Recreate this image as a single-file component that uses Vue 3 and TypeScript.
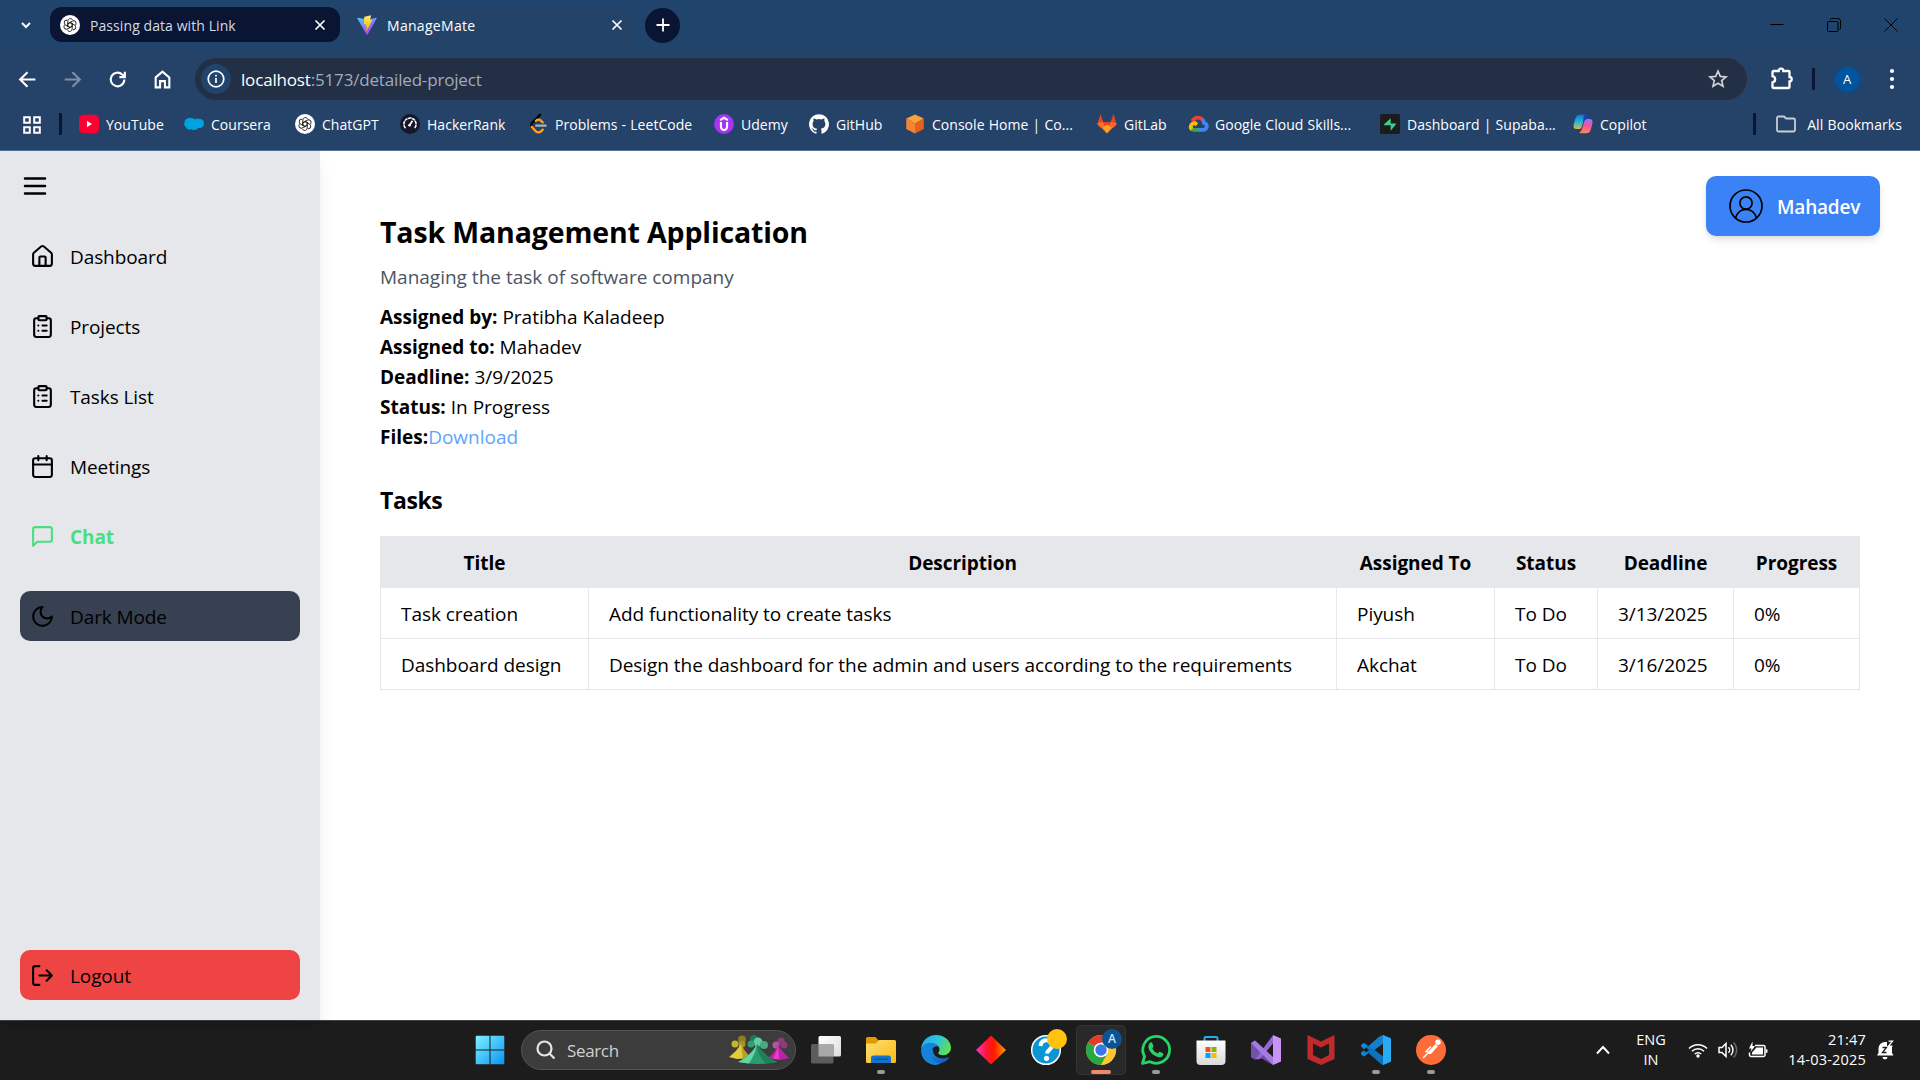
<script setup lang="ts">
interface Bookmark { label: string; icon: string }
interface NavItem { label: string; icon: string; active?: boolean }
interface TaskRow { title: string; description: string; assignee: string; status: string; deadline: string; progress: string }
interface TaskbarApp { name: string; icon: string; running?: boolean; focused?: boolean }

const knot =
  '<circle cx="12" cy="12" r="12" fill="#fff"/><g fill="none" stroke="#222" stroke-width="1.1">' +
  [0, 60, 120, 180, 240, 300]
    .map((a) => `<path transform="rotate(${a} 12 12)" d="M9.4 13.6V7.2a3 3 0 0 1 5.2-2l.6 1M9.4 10.5l3.6-2.1"/>`)
    .join('') +
  '</g>'

const icons: Record<string, string> = {
  openai: knot,
  vite:
    '<defs><linearGradient id="va" x1="0" y1="0" x2=".6" y2="1"><stop stop-color="#41d1ff"/><stop offset="1" stop-color="#bd34fe"/></linearGradient><linearGradient id="vb" x1="0" y1="0" x2="0" y2="1"><stop stop-color="#ffea83"/><stop offset=".3" stop-color="#ffdd35"/><stop offset="1" stop-color="#ffa800"/></linearGradient></defs><path d="M23.6 4.3 12.7 23.5a.7.7 0 0 1-1.2 0L.4 4.3a.7.7 0 0 1 .7-1l10.9 2 10.9-2a.7.7 0 0 1 .7 1z" fill="url(#va)"/><path d="M17 .4 9 2a.4.4 0 0 0-.3.3L8.2 10.6a.4.4 0 0 0 .4.4l2.3-.5-.7 3.300c0 .3.200.5.500.4l1.400-.4-1.100 5.200c0 .3.400.500.600.200l.100-.200 6.400-12.700c.1-.3-.1-.6-.4-.5l-2.300.4 1.500-5.200c0-.3-.1-.6-.4-.6z" fill="url(#vb)"/>',
  youtube: '<rect y="1" width="24" height="22" rx="5" fill="#ff0033"/><path d="M9.500 8v8l6-4z" fill="#fff"/>',
  coursera: '<path d="M9.500 5a5.500 5.500 0 0 1 4 1.500A5 5 0 0 1 19 6a5 5 0 0 1 5 5.500 5.300 5.300 0 0 1-7 5A4.500 4.500 0 0 1 12 19a5 5 0 0 1-3.500-.6A5 5 0 0 1 2 15.500 5 5 0 0 1 .5 10 5 5 0 0 1 4 5.500 7 7 0 0 1 9.500 5z" fill="#00a1e0"/>',
  hackerrank: '<circle cx="12" cy="12" r="12" fill="#15172b"/><path d="M6.500 17a7.300 7.300 0 1 1 11 0" fill="none" stroke="#fff" stroke-width="1.900" stroke-dasharray="4 .7"/><path d="m11 14 4-6" stroke="#fff" stroke-width="2"/><circle cx="11.500" cy="13.500" r="1.600" fill="#fff"/>',
  leetcode: '<path d="M14.500 1 5.300 10.300a4.500 4.500 0 0 0 0 6.400" fill="none" stroke="#000" stroke-width="2.800" stroke-linecap="round"/><path d="m4.500 15.500 5 5.300c1.700 1.700 4.500 1.700 6.200 0l2-2" fill="none" stroke="#ffa116" stroke-width="2.800" stroke-linecap="round"/><path d="M9.500 8.200c1.700-1.700 4.500-1.700 6.200 0l2 1.900" fill="none" stroke="#ffa116" stroke-width="2.800" stroke-linecap="round"/><path d="M10 14h11" stroke="#b3b3b3" stroke-width="2.800" stroke-linecap="round"/>',
  udemy: '<circle cx="12" cy="12" r="12" fill="#a435f0"/><path d="m7.300 7.300 4.700-2.800 4.700 2.800M8.300 9.500v6a3.700 3.700 0 0 0 7.400 0v-6" fill="none" stroke="#fff" stroke-width="2.500"/>',
  github: '<path fill="#fff" d="M12 .3a12 12 0 0 0-3.800 23.400c.6.1.8-.3.8-.6v-2c-3.300.7-4-1.600-4-1.600-.6-1.400-1.400-1.800-1.400-1.800-1-.7.1-.7.1-.7 1.200 0 1.900 1.200 1.900 1.200 1 1.800 2.800 1.300 3.500 1 0-.8.400-1.300.700-1.600-2.700-.3-5.500-1.300-5.500-6 0-1.200.500-2.300 1.300-3.100-.2-.4-.6-1.600 0-3.200 0 0 1-.3 3.400 1.200a11.500 11.500 0 0 1 6 0c2.300-1.500 3.300-1.200 3.300-1.200.6 1.600.2 2.800 0 3.200.9.800 1.300 1.900 1.300 3.200 0 4.600-2.800 5.600-5.500 5.900.5.400.900 1 .900 2.200v3.300c0 .3.1.7.8.6A12 12 0 0 0 12 .3"/>',
  aws: '<path d="M12 .5 22.500 5.500 12 11.500 1.500 5.500z" fill="#f9a33b"/><path d="M1.500 5.500 12 11.500v12L1.500 18z" fill="#f58536"/><path d="M22.500 5.500 12 11.500v12L22.500 18z" fill="#e8601c"/>',
  gitlab: '<path d="m4.600.8 3 8.700h8.800l3-8.700c.2-.5.700-.4.800 0l3.400 11.500-3 3.600H3.400l-3-3.600L3.800.8c.1-.4.600-.5.800 0z" fill="#e24329"/><path d="M.3 12 12 23.500l-4.500-14L2 10.500z" fill="#fc6d26"/><path d="M23.700 12 12 23.500l4.500-14 5.500 1z" fill="#fc6d26"/><path d="M7.500 9.500h9L12 14.800z" fill="#e24329"/><path d="m7 16 5-3.500 5 3.500-5 7.500z" fill="#fca326"/>',
  gcloud: '<g fill="none" stroke-width="4.600"><path d="M5.300 8.500A7.300 7.300 0 0 1 17.500 7" stroke="#ea4335"/><path d="M17 6.500c1.500 1.300 2 2.500 2.200 4.200a4.200 4.200 0 0 1-1.200 8.300h-6" stroke="#4285f4"/><path d="M12.500 19H6.500a4.500 4.500 0 0 1-2.500-.9" stroke="#34a853"/><path d="M4.600 18.500a4.500 4.500 0 0 1 4-7.500l2 2" stroke="#fbbc05"/></g>',
  supabase: '<rect width="24" height="24" rx="2" fill="#1c1c1c"/><path d="M12.800 5v6.500h5.600c.8 0 1 .7.600 1.200L12.800 20v-6.500H5.600c-.8 0-1-.7-.6-1.200z" fill="#3ecf8e"/>',
  copilot: '<defs><linearGradient id="ca" x1="0" y1="0" x2="0" y2="1"><stop stop-color="#1477d8"/><stop offset=".5" stop-color="#23b6d8"/><stop offset="1" stop-color="#e6b73a"/></linearGradient><linearGradient id="cb" x1=".5" y1="0" x2=".5" y2="1"><stop stop-color="#a66bf2"/><stop offset=".5" stop-color="#f0569a"/><stop offset="1" stop-color="#fb8a5c"/></linearGradient></defs><path d="M15.500 1H7.500C4.500 1 3.300 4 2.300 7.500S-1.500 18 4 18h3.500c2 0 2.500-1.500 3-3l3-9.500c.5-2 1.300-2.800 3-2.800z" fill="url(#ca)"/><path d="M8.500 23h8c3.500 0 4.500-3 5.500-6.500S25.500 6 20 6h-3.500c-2 0-2.500 1.500-3 3l-3 9.500c-.5 2-1.300 3-3 3z" fill="url(#cb)"/><path d="M13 1h3c2.300 0 2.800 2.500 3.500 5H16.500c-1.500 0-2.500 1.500-3 3l-1.500-.1z" fill="#1746a8"/>',
  menu: '<path d="M4 12h16M4 6h16M4 18h16"/>',
  home: '<path d="M15 21v-8a1 1 0 0 0-1-1h-4a1 1 0 0 0-1 1v8"/><path d="M3 10a2 2 0 0 1 .709-1.528l7-5.999a2 2 0 0 1 2.582 0l7 5.999A2 2 0 0 1 21 10v9a2 2 0 0 1-2 2H5a2 2 0 0 1-2-2z"/>',
  clipboard: '<rect width="8" height="4" x="8" y="2" rx="1"/><path d="M16 4h2a2 2 0 0 1 2 2v14a2 2 0 0 1-2 2H6a2 2 0 0 1-2-2V6a2 2 0 0 1 2-2h2M12 11h4M12 16h4M8 11h.01M8 16h.01"/>',
  calendar: '<path d="M8 2v4M16 2v4M3 10h18"/><rect width="18" height="18" x="3" y="4" rx="2"/>',
  chat: '<path d="M21 15a2 2 0 0 1-2 2H7l-4 4V5a2 2 0 0 1 2-2h14a2 2 0 0 1 2 2z"/>',
  moon: '<path d="M12 3a6 6 0 0 0 9 9 9 9 0 1 1-9-9Z"/>',
  logout: '<path d="M9 21H5a2 2 0 0 1-2-2V5a2 2 0 0 1 2-2h4M16 17l5-5-5-5M21 12H9"/>',
  windows: '<defs><linearGradient id="wi" x1="0" y1="0" x2="1" y2="1"><stop stop-color="#7ff0ff"/><stop offset="1" stop-color="#0a95f5"/></linearGradient></defs><path fill="url(#wi)" d="M2 .7h12.500v13.800H.7V2C.7 1.200 1.200.7 2 .7zM15.500.7H28c.8 0 1.300.5 1.300 1.300v12.500H15.500zM.7 15.500h13.800v13.800H2c-.8 0-1.300-.5-1.300-1.300zM15.500 15.500h13.800V28c0 .8-.5 1.300-1.300 1.300H15.500z"/>',
  taskview: '<defs><linearGradient id="tv" x1="0" y1="0" x2="1" y2="1"><stop stop-color="#fff"/><stop offset="1" stop-color="#dcdcdc"/></linearGradient></defs><rect x="7.500" y="1" width="22.500" height="20.500" rx="1.500" fill="url(#tv)"/><rect y="9" width="22.500" height="19.500" rx="1.500" fill="#5c5c5c"/><path d="M7.500 9h14a1 1 0 0 1 1 1v11.500h-15z" fill="#a9a9a9"/>',
  explorer: '<defs><linearGradient id="ex" x1="0" y1="0" x2="1" y2="1"><stop stop-color="#ffdf72"/><stop offset="1" stop-color="#fdb913"/></linearGradient></defs><path d="M0 3.500A1.500 1.500 0 0 1 1.500 2h8l3 3.500V12H0z" fill="#e09a00"/><path d="M0 8.500h9.500L13 5h15.500A1.500 1.500 0 0 1 30 6.500v20a1.500 1.500 0 0 1-1.500 1.500h-27A1.500 1.500 0 0 1 0 26.500z" fill="url(#ex)"/><path d="M5 28v-5a2.500 2.500 0 0 1 2.500-2.500h15A2.500 2.500 0 0 1 25 23v5z" fill="#1173cc"/><path d="M8.500 24.200h13" stroke="#064f97" stroke-width="1.200"/>',
  edge: '<defs><linearGradient id="ea" x1="0" y1=".2" x2="1" y2=".6"><stop stop-color="#27a9ee"/><stop offset=".5" stop-color="#2fc6dc"/><stop offset="1" stop-color="#62e14c"/></linearGradient><linearGradient id="eb" x1="0" y1="0" x2="1" y2="1"><stop stop-color="#178ae0"/><stop offset="1" stop-color="#0f58b0"/></linearGradient></defs><path d="M0 14C.8 5.600 7 0 15 0c8.500 0 15 6 15 12.700 0 4.300-3.500 7.500-7.800 7.500-3.600 0-5-1.200-5-2.200 0-.9 1.300-1.300 1.300-3.500 0-3-3-5.700-8-5.700C5.500 8.800 2 11 0 14z" fill="url(#ea)"/><path d="M0 15.500c0-4.300 4.500-7.700 9.500-7.700 4 0 6.500 1.500 7.800 3.500-4.500-.8-7.300 3-6.300 7 1.200 5 6.500 8.500 11.500 8A15 15 0 0 1 15 30C6.500 30 0 23.500 0 15.500z" fill="#1583dc"/><path d="M11 14.500c-2.800 4-.5 10 3.500 12.500 4.300 2.500 10 1 13.500-4 .4-.6.100-1-.6-.7-5.500 2.200-12.700 1.200-15-4.300-.5-1.200-.4-3-.4-3z" fill="url(#eb)"/>',
  diamond: '<defs><linearGradient id="di"><stop stop-color="#ff35c8"/><stop offset=".35" stop-color="#ff1538"/><stop offset=".6" stop-color="#ff1a00"/><stop offset="1" stop-color="#ff9c00"/></linearGradient></defs><path d="M15 .5 30 15 15 29.500 0 15z" fill="url(#di)"/>',
  help: '<circle cx="15" cy="15" r="14.300" fill="#0a95d4" stroke="#fff" stroke-width="1.500"/><path d="M9.500 11c.4-4 3-5.800 6-5.800 3.300 0 5.700 1.900 5.700 5 0 4-4.900 4.500-5.200 8.500" fill="none" stroke="#fff" stroke-width="4"/><circle cx="15.500" cy="23.300" r="2.600" fill="#fff"/><circle cx="26" cy="4" r="10" fill="#ffc20e"/>',
  chrome: '<circle cx="15" cy="15" r="15" fill="#fbc02d"/><path d="M15 15 2 7.500A15 15 0 0 1 28 7.500H15z" fill="#e33b2e"/><path d="M2 7.500A15 15 0 0 0 15 30l6.500-11.200L15 15z" fill="#28a745"/><path d="M15 7.500h13A15 15 0 0 1 15 30l6.500-11.200z" fill="#fdc530"/><circle cx="15" cy="15" r="7.300" fill="#fff"/><circle cx="15" cy="15" r="5.700" fill="#3678e5"/>',
  whatsapp: '<path d="M1.500 28.500 3.600 21.500A13.400 13.400 0 1 1 9 26.700z" fill="none" stroke="#25d366" stroke-width="2.800" stroke-linejoin="round"/><path d="M9 7.800c.8-.8 1.800-.7 2.200.2l1.200 2.700c.3.700-.1 1.200-1.200 2.500 1.200 2.500 3 4.200 5.600 5.300 1-1.200 1.400-2 2.100-1.700l3 1.400c.7.300.7.800.4 1.700-.6 1.800-2.600 2.700-4.300 2.400-5-.9-9.300-4.800-10.400-9-.5-2.200.2-4.300 1.400-5.500z" fill="#25d366"/>',
  store: '<defs><linearGradient id="st" x1="0" y1="0" x2="0" y2="1"><stop stop-color="#fff"/><stop offset="1" stop-color="#dadada"/></linearGradient></defs><path d="M8.500 7V3.200C8.500 2.400 9 2 9.700 2h10.600c.700 0 1.200.4 1.200 1.200V7" fill="none" stroke="#22aeea" stroke-width="2"/><path d="M.5 5.500h29V26a4 4 0 0 1-4 4h-21a4 4 0 0 1-4-4z" fill="url(#st)"/><path d="M9.500 12h5v5h-5z" fill="#f25022"/><path d="M15.500 12h5v5h-5z" fill="#7fba00"/><path d="M9.500 18h5v5h-5z" fill="#00a4ef"/><path d="M15.500 18h5v5h-5z" fill="#ffb900"/>',
  vstudio: '<path d="M0 8 4 5.500 21 24l1 6L3 19v-1l-3 4.500z" fill="#6d4aa5"/><path d="M0 8v14.500L4 24.500l7-7.500-2.500-3.500L5 17v-5.500z" fill="#7350ad"/><path d="M4 24.500 22 .2v8.300L9 24z" fill="#9567d5"/><path d="M4 5.500 22 22v8L0 8z" fill="#a57adf"/><path d="M22 0 30 3.500v23L22 30z" fill="#c994f8"/>',
  mcafee: '<path d="M1.500 0 15 6.500 28.500 0v24L15 30 1.500 24zM7 8.500V20l8 4 8-4V8.500l-8 4z" fill="#c02a2c" fill-rule="evenodd"/>',
  vscode: '<path d="M22 0 30 3.500v23L22 30 8 17.500 3.500 21.500 0 19.800v-2L18 1.800z" fill="#1380cf"/><path d="M0 11.500v-1.700L3.500 8 22 22v8L20 29z" fill="#0b72bd"/><path d="M22 0 30 3.500v23L22 30z" fill="#2aaaf3"/><path d="M22 8.500v13L13.500 15z" fill="#1c1c1c"/><path d="M0 10.500 2.500 8l4 3L3 14.500z" fill="#1487d8"/><path d="M5 12.500 2.300 15 5 17.500 8 15z" fill="#1c1c1c"/>',
  postman: '<circle cx="15" cy="15" r="15" fill="#ff6c37"/><circle cx="22" cy="7.300" r="2.700" fill="#fff"/><path d="m19.500 9.500 2 1.500-6.500 7.500-3.500-.5z" fill="#fff" stroke="#fff"/><path d="m12.500 17.500-5.500 5.500M15 11.500l-5 5 4.500 1" fill="none" stroke="#fff" stroke-width="1.500"/>',
}

const bookmarks: Bookmark[] = [
  { label: 'YouTube', icon: 'youtube' },
  { label: 'Coursera', icon: 'coursera' },
  { label: 'ChatGPT', icon: 'openai' },
  { label: 'HackerRank', icon: 'hackerrank' },
  { label: 'Problems - LeetCode', icon: 'leetcode' },
  { label: 'Udemy', icon: 'udemy' },
  { label: 'GitHub', icon: 'github' },
  { label: 'Console Home | Co...', icon: 'aws' },
  { label: 'GitLab', icon: 'gitlab' },
  { label: 'Google Cloud Skills...', icon: 'gcloud' },
  { label: 'Dashboard | Supaba...', icon: 'supabase' },
  { label: 'Copilot', icon: 'copilot' },
]

const nav: NavItem[] = [
  { label: 'Dashboard', icon: 'home' },
  { label: 'Projects', icon: 'clipboard' },
  { label: 'Tasks List', icon: 'clipboard' },
  { label: 'Meetings', icon: 'calendar' },
  { label: 'Chat', icon: 'chat', active: true },
]

const project = {
  name: 'Task Management Application',
  summary: 'Managing the task of software company',
  facts: [
    { label: 'Assigned by:', value: 'Pratibha Kaladeep' },
    { label: 'Assigned to:', value: 'Mahadev' },
    { label: 'Deadline:', value: '3/9/2025' },
    { label: 'Status:', value: 'In Progress' },
  ],
}

const columns = ['Title', 'Description', 'Assigned To', 'Status', 'Deadline', 'Progress']
const tasks: TaskRow[] = [
  { title: 'Task creation', description: 'Add functionality to create tasks', assignee: 'Piyush', status: 'To Do', deadline: '3/13/2025', progress: '0%' },
  { title: 'Dashboard design', description: 'Design the dashboard for the admin and users according to the requirements', assignee: 'Akchat', status: 'To Do', deadline: '3/16/2025', progress: '0%' },
]

const apps: TaskbarApp[] = [
  { name: 'Task view', icon: 'taskview' },
  { name: 'File Explorer', icon: 'explorer', running: true },
  { name: 'Edge', icon: 'edge' },
  { name: 'Diamond', icon: 'diamond' },
  { name: 'Help', icon: 'help' },
  { name: 'Chrome', icon: 'chrome', running: true, focused: true },
  { name: 'WhatsApp', icon: 'whatsapp', running: true },
  { name: 'Store', icon: 'store' },
  { name: 'Visual Studio', icon: 'vstudio' },
  { name: 'McAfee', icon: 'mcafee' },
  { name: 'VS Code', icon: 'vscode', running: true },
  { name: 'Postman', icon: 'postman', running: true },
]
</script>

<template>
  <div class="desktop">
    <header class="browser">
      <div class="tabstrip">
        <svg class="tab-search" viewBox="0 0 12 12"><path d="m2 4 4 4 4-4" /></svg>
        <div class="tab">
          <svg class="favicon" viewBox="0 0 24 24" v-html="icons.openai"></svg>
          <span class="tab-title">Passing data with Link</span>
          <svg class="tab-close" viewBox="0 0 12 12"><path d="m1.500 1.500 9 9m0-9-9 9" /></svg>
        </div>
        <div class="tab current">
          <svg class="favicon" viewBox="0 0 24 24" v-html="icons.vite"></svg>
          <span class="tab-title">ManageMate</span>
          <svg class="tab-close" viewBox="0 0 12 12"><path d="m1.500 1.500 9 9m0-9-9 9" /></svg>
        </div>
        <div class="new-tab"><svg viewBox="0 0 14 14"><path d="M7 .5v13M.5 7h13" /></svg></div>
        <div class="window-controls">
          <svg viewBox="0 0 14 14"><path d="M.5 6.500h13" /></svg>
          <svg viewBox="0 0 14 14"><path d="M1.500 3.500h8.500a1 1 0 0 1 1 1v8a1 1 0 0 1-1 1H1.500a1 1 0 0 1-1-1v-8a1 1 0 0 1 1-1z" /><path d="M3 1.500q.3-1 1.500-1H11A2.500 2.500 0 0 1 13.500 3v7q0 1.200-1 1.500" /></svg>
          <svg viewBox="0 0 14 14"><path d="m.5.5 13 13m0-13-13 13" /></svg>
        </div>
      </div>

      <div class="toolbar">
        <div class="nav-buttons">
          <svg viewBox="0 0 20 20"><path d="M17.500 10H3.500M10 3l-7 7 7 7" /></svg>
          <svg class="disabled" viewBox="0 0 20 20"><path d="M2.500 10h14M10 3l7 7-7 7" /></svg>
          <svg viewBox="0 0 20 20"><path d="M16.500 10a6.500 6.500 0 1 1-2-4.700L17 7.500M17 2.500v5.200h-5.200" /></svg>
          <svg viewBox="0 0 20 20"><path d="M3.500 8 10 2.500 16.500 8v9.500h-4.200v-6H7.700v6H3.500z" /></svg>
        </div>
        <div class="omnibox">
          <span class="site-info"><svg viewBox="0 0 18 18"><circle cx="9" cy="9" r="7.800" /><path d="M9 8v5M9 4.800v1.700" /></svg></span>
          <span class="url"><b>localhost</b>:5173/detailed-project</span>
          <svg class="star" viewBox="0 0 20 20"><path d="m10 2.200 2.300 5.200 5.700.5-4.300 3.700 1.300 5.600-5-3-5 3 1.300-5.600L2 7.900l5.700-.5z" /></svg>
        </div>
        <svg class="extensions" viewBox="0 0 22 24"><path d="M2.500 5h5.200a2.300 2.300 0 0 1 4.600 0h5.200a1 1 0 0 1 1 1v5a2.200 2.200 0 0 1 0 4.400V21a1 1 0 0 1-1 1h-15a1 1 0 0 1-1-1v-4.500a3.200 3.200 0 0 0 0-6.300V6a1 1 0 0 1 1-1z" /></svg>
        <i class="divider"></i>
        <span class="profile"><span>A</span></span>
        <svg class="kebab" viewBox="0 0 6 24"><circle cx="3" cy="4" r="2.100" /><circle cx="3" cy="12" r="2.100" /><circle cx="3" cy="20" r="2.100" /></svg>
      </div>

      <div class="bookmarks">
        <svg class="apps-grid" viewBox="0 0 18 18"><path d="M1.200 1.200h5.600v5.600H1.200zM11.200 1.200h5.600v5.600h-5.600zM1.200 11.200h5.600v5.600H1.200zM11.200 11.200h5.600v5.600h-5.600z" /></svg>
        <i class="divider"></i>
        <div class="bookmark-list">
          <span v-for="b in bookmarks" :key="b.label" class="bookmark">
            <svg viewBox="0 0 24 24" v-html="icons[b.icon]"></svg><span>{{ b.label }}</span>
          </span>
        </div>
        <i class="divider"></i>
        <svg class="folder" viewBox="0 0 20 18"><path d="M1 3.500V15a1.500 1.500 0 0 0 1.500 1.500h15A1.500 1.500 0 0 0 19 15V5a1.500 1.500 0 0 0-1.500-1.500H10l-2-2H2.500A1.500 1.500 0 0 0 1 3z" /></svg>
        <span class="all">All Bookmarks</span>
      </div>
    </header>

    <div class="page">
      <aside class="sidebar">
        <svg class="line-icon menu" viewBox="0 0 24 24" v-html="icons.menu"></svg>
        <nav>
          <a v-for="n in nav" :key="n.label" class="nav-item" :class="{ active: n.active }">
            <svg class="line-icon" viewBox="0 0 24 24" v-html="icons[n.icon]"></svg><span>{{ n.label }}</span>
          </a>
          <button class="nav-item dark">
            <svg class="line-icon" viewBox="0 0 24 24" v-html="icons.moon"></svg><span>Dark Mode</span>
          </button>
        </nav>
        <button class="nav-item logout">
          <svg class="line-icon" viewBox="0 0 24 24" v-html="icons.logout"></svg><span>Logout</span>
        </button>
      </aside>

      <main class="content">
        <button class="user">
          <svg viewBox="0 0 34 34"><circle cx="17" cy="17" r="16" /><circle cx="17" cy="14" r="6.100" /><path d="M6.500 29c1.500-5 5.500-8.500 10.500-8.500S26 24 27.500 29" /></svg>
          <span>Mahadev</span>
        </button>
        <h1>{{ project.name }}</h1>
        <p class="summary">{{ project.summary }}</p>
        <p v-for="f in project.facts" :key="f.label"><strong>{{ f.label }}</strong> {{ f.value }}</p>
        <p><strong>Files:</strong><a class="download">Download</a></p>
        <h2>Tasks</h2>
        <table>
          <colgroup><col v-for="(c, i) in columns" :key="c" :class="'col' + i" /></colgroup>
          <thead><tr><th v-for="c in columns" :key="c"><span>{{ c }}</span></th></tr></thead>
          <tbody>
            <tr v-for="t in tasks" :key="t.title">
              <td v-for="(v, k) in t" :key="k"><span>{{ v }}</span></td>
            </tr>
          </tbody>
        </table>
      </main>
    </div>

    <footer class="taskbar">
      <div class="dock">
        <svg class="start" viewBox="0 0 30 30" v-html="icons.windows"></svg>
        <div class="search">
          <svg class="lens" viewBox="0 0 20 20"><circle cx="8.500" cy="8.500" r="7" /><path d="m13.500 13.500 5 5" /></svg>
          <span>Search</span>
          <svg class="tents" viewBox="0 0 60 30">
            <g fill="#8d7c1d"><circle cx="13" cy="4.500" r="4" /><circle cx="6" cy="9" r="3.500" fill="#c9b52c" /><circle cx="13" cy="9" r="3.500" fill="#a99325" /></g>
            <g fill="#1e7a58"><circle cx="25" cy="4" r="4" /><circle cx="29" cy="7" r="4.500" fill="#5fcf9f" /><circle cx="22" cy="9" r="3.500" fill="#369c73" /><circle cx="35" cy="10" r="4" fill="#47a881" /></g>
            <g fill="#8c3c79"><circle cx="52" cy="6" r="3.500" /><circle cx="47" cy="10" r="3.500" fill="#b3579a" /><circle cx="55" cy="10" r="3.500" /></g>
            <path d="M12 9C9 14 5 18 0 22l8 2 14-1c-4-4-8-9-10-14z" fill="#e3cb3c" /><path d="M12 9c2 5 6 10 10 14l-8 1z" fill="#b89e25" />
            <path d="M49 10c-2 5-6 10-10 13l12 2 9-2c-4-4-8-8-11-13z" fill="#c01fa8" /><path d="M49 10c-1 5-3 10-5 14h6z" fill="#e53fd0" />
            <path d="M28 9C24 17 17 23 9 27q19 4 39 0C39 23 33 17 28 9z" fill="#2a9c6e" /><path d="M28 9C24 17 17 23 9 27l11 1.500C24 23 27 16 28 9z" fill="#63d6a6" /><path d="M28 9c0 8 4 15 9 19.500l11-1.500C39 23 33 17 28 9z" fill="#1f8058" />
          </svg>
        </div>
        <span v-for="a in apps" :key="a.name" class="app" :class="{ running: a.running, focused: a.focused }">
          <svg viewBox="0 0 30 30" v-html="icons[a.icon]"></svg>
          <b v-if="a.focused" class="badge">A</b>
        </span>
      </div>
      <div class="tray">
        <svg class="chevron" viewBox="0 0 14 10"><path d="m1 8.500 6-6.500 6 6.500" /></svg>
        <span class="lang">ENG<br />IN</span>
        <svg class="wifi" viewBox="0 0 20 16"><path d="M1 6.500a12.500 12.500 0 0 1 18 0M4 9.300a8.500 8.500 0 0 1 12 0M6.800 12a4.500 4.500 0 0 1 6.400 0" /><circle cx="10" cy="14" r="1.700" /></svg>
        <svg class="sound" viewBox="0 0 20 18"><path d="M1 6.500h3L8 2.500v13l-4-4H1z" /><path d="M10.500 6.200a4 4 0 0 1 0 5.600M12.800 3.800a7.300 7.300 0 0 1 0 10.400" /><path d="M15.500 1.500a10.500 10.500 0 0 1 0 15" stroke="#666" /></svg>
        <svg class="battery" viewBox="0 0 20 18"><path d="M7 4.500h8.500a1.500 1.500 0 0 1 1.500 1.500v8a1.500 1.500 0 0 1-1.500 1.500H3A1.500 1.500 0 0 1 1.500 14v-2.500" /><path d="M8.500 6.500H15v7H4v-2z" fill="#fff" stroke="none" /><path d="M18.700 8.300v3.500" /><path d="M4.500.5 1 7.500h2.500L2.500 11 7 5H4.500z" fill="#fff" stroke="none" /></svg>
        <span class="clock">21:47<br />14-03-2025</span>
        <svg class="bell" viewBox="0 0 18 20"><path d="M1 15.500 2.500 13V8A6.500 6.500 0 0 1 9 2h2v4h5v7l1.500 2.500zM6.500 17h5a2.500 2.500 0 0 1-5 0z" fill="#fff" /><path d="M6.500 7.500h4l-4 5h4" fill="none" stroke="#1c1c1c" stroke-width="1.300" /><path d="M12.500 1.200h4l-4 5h4" fill="none" stroke="#fff" stroke-width="1.300" /></svg>
      </div>
    </footer>
  </div>
</template>

<style>
body { overflow: hidden; }
</style>

<style scoped>
.desktop {
  width: 1920px; height: 1080px; display: flex; flex-direction: column; overflow: hidden;
  font-family: 'Open Sans', 'Noto Sans', sans-serif; color: #000; background: #fff;
}
.desktop *, .desktop { box-sizing: border-box; }
svg { display: block; flex: none; overflow: visible; }
button { border: 0; font: inherit; color: inherit; text-align: left; letter-spacing: inherit; }
p, h1, h2 { margin: 0; }

.browser { height: 151px; flex: none; display: flex; flex-direction: column; background: #254269; border-bottom: 1px solid #4f7096; color: #fff; }
.tabstrip { height: 50px; background: #20446c; display: flex; align-items: center; padding: 0 22px 0 20px; }
.tab-search { width: 12px; height: 12px; fill: none; stroke: #fff; stroke-width: 2; }
.tab { width: 290px; height: 35px; margin: -1px 0 0 18px; padding: 0 14px 0 10px; border-radius: 12px; background: #0a1433; display: flex; align-items: center; font-size: 14px; letter-spacing: 0.08px; color: #d4dae3; }
.tab.current { height: 43px; margin: 7px 0 0 4px; padding: 0 11px 8px 13px; border-radius: 12px 12px 0 0; background: #234369; color: #fff; letter-spacing: 0.3px; }
.favicon { width: 20px; height: 20px; margin-right: 10px; }
.tab-title { flex: 1; white-space: nowrap; padding-top: 1px; }
.tab-close { width: 12px; height: 12px; stroke: #fff; stroke-width: 1.7; }
.new-tab { width: 35px; height: 35px; margin-left: 11px; border-radius: 50%; background: #0a1433; display: grid; place-items: center; }
.new-tab svg { width: 14px; stroke: #fff; stroke-width: 1.8; }
.window-controls { margin: -1px 0 0 auto; display: flex; gap: 43px; }
.window-controls svg { width: 14px; height: 14px; fill: none; stroke: #000; stroke-width: 1; }

.toolbar { height: 58px; display: flex; align-items: center; padding-left: 17px; }
.nav-buttons { display: flex; gap: 24px; }
.nav-buttons svg { width: 21px; height: 21px; fill: none; stroke: #fff; stroke-width: 2; }
.nav-buttons .disabled { stroke: #7f8ea5; }
.omnibox { width: 1552px; height: 42px; margin-left: 22px; border-radius: 21px; background: #222f45; display: flex; align-items: center; padding: 0 19px 0 6px; }
.site-info { width: 30px; height: 30px; border-radius: 50%; background: #20446c; display: grid; place-items: center; }
.site-info svg { width: 18px; fill: none; stroke: #fff; stroke-width: 1.7; }
.url { flex: 1; margin-left: 10px; font-size: 17px; color: #a2abb9; letter-spacing: -0.17px; }
.url b { font-weight: 400; color: #fff; }
.star { width: 20px; height: 20px; fill: none; stroke: #d0d2d5; stroke-width: 1.7; }
.extensions { width: 22px; height: 24px; margin: -2px 0 0 24px; fill: none; stroke: #fff; stroke-width: 2.300; }
.divider { width: 3px; height: 22px; border-radius: 1px; background: #0a1433; }
.toolbar .divider { margin-left: 19px; }
.profile { width: 40px; height: 40px; margin-left: 12px; border-radius: 50%; background: #20446c; display: grid; place-items: center; }
.profile span { width: 25px; height: 25px; border-radius: 50%; background: #00569e; font-size: 13px; line-height: 25px; text-align: center; }
.kebab { width: 6px; height: 24px; margin: -1px 0 0 22px; fill: #fff; }

.bookmarks { height: 34px; display: flex; align-items: center; font-size: 14px; letter-spacing: 0.03px; word-spacing: 0.500px; padding: 0 18px 2px 23px; }
.apps-grid { width: 18px; height: 18px; margin-top: 1px; fill: none; stroke: #fff; stroke-width: 2; }
.apps-grid + .divider { margin: 0 17px 0 18px; }
.bookmark-list { flex: 1; display: grid; grid-template-columns: 105px 111px 105px 128px 186px 95px 96px 192px 91px 192px 193px auto; }
.bookmark { display: flex; align-items: center; gap: 7px; white-space: nowrap; }
.bookmark svg { width: 20px; height: 20px; }
.folder { width: 20px; height: 18px; margin: 0 11px 0 20px; fill: none; stroke: #c9ced6; stroke-width: 1.800; }
.all { letter-spacing: 0.080px; }

.page { height: 869px; flex: none; display: flex; }
.sidebar { width: 320px; padding: 20px; background: #e5e7eb; display: flex; flex-direction: column; box-shadow: 0 12px 19px -4px rgba(0,0,0,.1), 0 5px 8px -5px rgba(0,0,0,.1); font-size: 19px; letter-spacing: -0.1px; z-index: 1; }
.line-icon { width: 25px; height: 25px; fill: none; stroke: currentColor; stroke-width: 2; stroke-linecap: round; stroke-linejoin: round; }
.menu { width: 30px; height: 30px; }
.sidebar nav { margin-top: 30px; display: flex; flex-direction: column; gap: 20px; }
.nav-item { height: 50px; padding: 0 10px; border-radius: 10px; display: flex; align-items: center; gap: 15px; background: none; }
.nav-item span { padding-top: 2px; }
.nav-item.active { color: #4ade80; font-weight: 700; }
.dark { margin-top: 10px; background: #374151; }
.logout { margin-top: auto; background: #ef4444; }

.content { flex: 1; padding: 61px 60px 0; font-size: 19px; line-height: 30px; position: relative; }
.user { position: absolute; right: 40px; top: 25px; width: 174px; height: 60px; border-radius: 10px; background: #3b82f6; color: #fff; font-weight: 600; letter-spacing: -0.2px; display: flex; align-items: center; padding: 0 0 0 23px; gap: 14px; box-shadow: 0 5px 8px -1px rgba(0,0,0,.1), 0 2px 5px -2px rgba(0,0,0,.1); }
.user span { padding-top: 2px; }
.user svg { width: 34px; height: 34px; fill: none; stroke: #000; stroke-width: 1.700; }
h1 { font-size: 28.500px; line-height: 40px; font-weight: 700; letter-spacing: -0.14px; }
.summary { margin: 10px 0; color: #4b5563; }
.download { color: #60a5fa; }
h2 { margin: 30px 0 18px; font-size: 23px; line-height: 36px; font-weight: 700; letter-spacing: -0.4px; }
table { width: 1480px; table-layout: fixed; border-collapse: collapse; letter-spacing: -0.05px; }
th, td { height: 51px; padding: 1px 20px 0; border: 1px solid #e5e7eb; text-align: left; white-space: nowrap; }
th { background: #e5e7eb; text-align: center; font-weight: 700; padding: 2px 0 0; }
.col0 { width: 208px; } .col1 { width: 748px; } .col2 { width: 158px; } .col3 { width: 103px; } .col4 { width: 136px; }

.taskbar { height: 60px; flex: none; background: #1c1c1c; border-top: 1px solid #444; display: flex; justify-content: space-between; color: #fff; }
.dock { display: flex; align-items: center; padding: 0 0 1px 474.500px; }
.start { width: 30px; height: 30px; }
.search { width: 275px; height: 40px; margin: 0 5px 0 16.500px; border-radius: 20px; background: #3c3c3c; border: 1px solid #545454; display: flex; align-items: center; padding: 0 6px 0 14px; font-size: 17px; letter-spacing: -0.35px; color: #d0d0d0; }
.lens { width: 20px; height: 20px; margin-right: 11px; fill: none; stroke: #e6e6e6; stroke-width: 2.200; }
.search span { flex: 1; }
.tents { width: 60px; height: 30px; }
.app { width: 50px; height: 50px; margin-right: 5px; border-radius: 5px; display: grid; place-items: center; position: relative; }
.app svg { width: 30px; height: 30px; }
.app.focused { background: #292929; box-shadow: inset 0 0 0 1px #333; }
.app.running::after { content: ''; position: absolute; bottom: 1px; left: 21px; width: 8px; height: 4px; border-radius: 2px; background: #9a9a9a; }
.app.focused::after { left: 15px; width: 20px; background: #f4866c; }
.badge { position: absolute; right: 4px; top: 4px; width: 20px; height: 20px; border-radius: 50%; background: #0b5394; font-size: 12px; font-weight: 600; line-height: 20px; text-align: center; color: #cfe2f3; }
.tray { display: flex; align-items: center; padding: 0 26px 2px 0; font-size: 14.500px; line-height: 20px; }
.tray svg { fill: none; stroke: #fff; stroke-width: 1.500; }
.tray .chevron { width: 14px; height: 10px; stroke-width: 1.900; margin-right: 26px; }
.lang { width: 30px; text-align: center; margin-right: 22px; }
.tray .wifi { width: 20px; height: 16px; margin-right: 10px; }
.tray .wifi circle { fill: #fff; stroke: none; }
.tray .sound { width: 20px; height: 18px; margin-right: 10px; }
.tray .battery { width: 20px; height: 18px; margin-right: 18px; }
.clock { width: 80px; text-align: right; margin-right: 10px; letter-spacing: 0.2px; white-space: nowrap; }
.tray .bell { width: 18px; height: 20px; stroke: none; }
</style>
